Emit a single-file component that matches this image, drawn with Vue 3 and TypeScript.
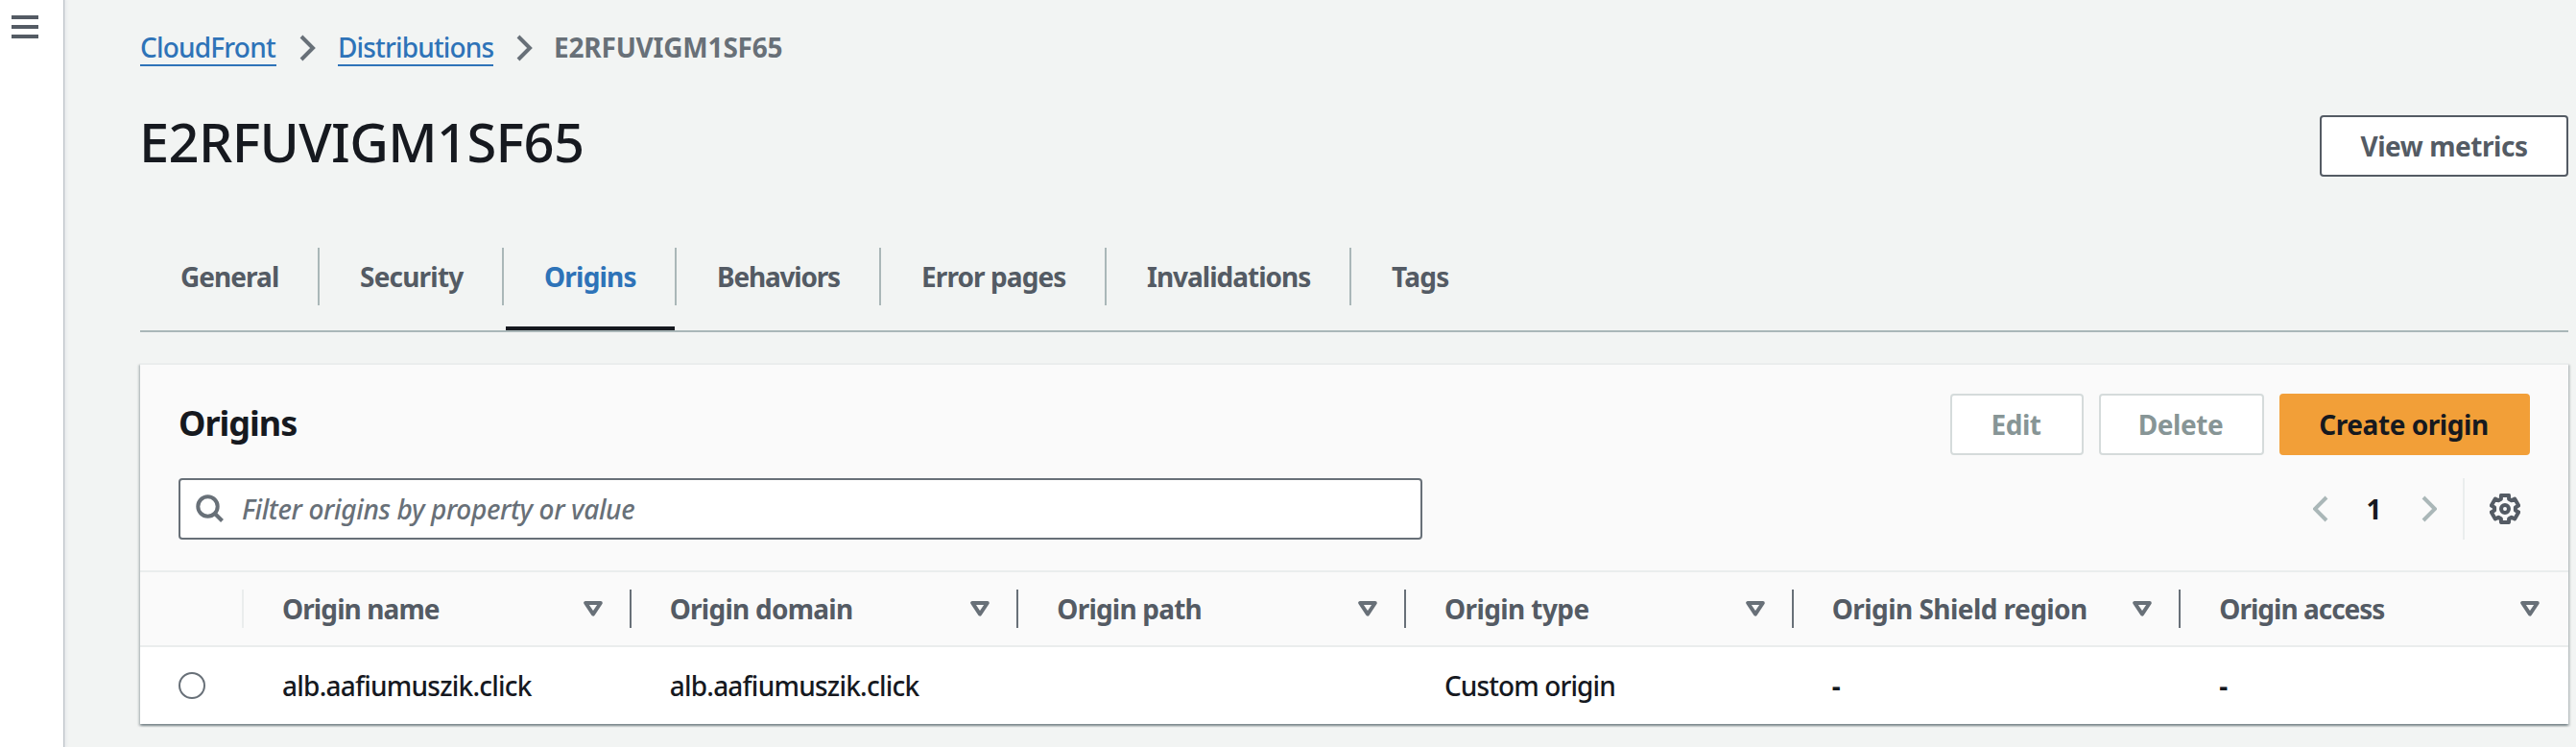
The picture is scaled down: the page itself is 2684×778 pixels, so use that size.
<script setup lang="ts">
interface Crumb { label: string; tracking: number; width: number }
interface Tab { label: string; tracking: number; active?: boolean }
interface Column { label: string; tracking: number; value: string; valueTracking: number }

const crumbs: Crumb[] = [
  { label: 'CloudFront', tracking: -0.8, width: 142 },
  { label: 'Distributions', tracking: -0.85, width: 162 },
]

const tabs: Tab[] = [
  { label: 'General', tracking: -0.95 },
  { label: 'Security', tracking: -0.8 },
  { label: 'Origins', tracking: -0.8, active: true },
  { label: 'Behaviors', tracking: -1.2 },
  { label: 'Error pages', tracking: -0.9 },
  { label: 'Invalidations', tracking: -1 },
  { label: 'Tags', tracking: -0.7 },
]

const columns: Column[] = [
  { label: 'Origin name', tracking: -0.9, value: 'alb.aafiumuszik.click', valueTracking: -0.77 },
  { label: 'Origin domain', tracking: -0.75, value: 'alb.aafiumuszik.click', valueTracking: -0.77 },
  { label: 'Origin path', tracking: -0.8, value: '', valueTracking: 0 },
  { label: 'Origin type', tracking: -0.6, value: 'Custom origin', valueTracking: -0.9 },
  { label: 'Origin Shield region', tracking: -0.55, value: '-', valueTracking: 0 },
  { label: 'Origin access', tracking: -1, value: '-', valueTracking: 0 },
]

const spacing = (px: number) => ({ letterSpacing: `${px}px` })

// Six-toothed gear outline centred in a 32x32 box.
const gearPoints = Array.from({ length: 6 }, (_, i) => i * 60 - 90)
  .flatMap((deg) => [
    [11, deg - 22],
    [14.6, deg - 16],
    [14.6, deg + 16],
    [11, deg + 22],
  ])
  .map(([r, deg]) => {
    const a = (deg * Math.PI) / 180
    return `${(16 + r * Math.cos(a)).toFixed(2)},${(16 + r * Math.sin(a)).toFixed(2)}`
  })
  .join(' ')
</script>

<template>
  <div class="page">
    <aside class="rail">
      <button class="burger" aria-label="Open navigation"><i></i><i></i><i></i></button>
    </aside>
    <main class="content">
      <nav class="crumbs">
        <template v-for="c in crumbs" :key="c.label">
          <a class="crumb" :style="{ letterSpacing: `${c.tracking}px`, width: `${c.width}px` }">{{ c.label }}</a>
          <svg class="sep" width="18" height="28" viewBox="0 0 18 28"><path d="M2 2 14 14 2 26" /></svg>
        </template>
        <span class="current">E2RFUVIGM1SF65</span>
      </nav>

      <header class="heading">
        <h1>E2RFUVIGM1SF65</h1>
        <button class="btn metrics">View metrics</button>
      </header>

      <div class="tabs">
        <div v-for="t in tabs" :key="t.label" class="tab" :class="{ active: t.active }">
          <span class="tab-label" :style="spacing(t.tracking)">{{ t.label }}</span>
        </div>
      </div>

      <section class="card">
        <div class="card-head">
          <div class="row">
            <h2>Origins</h2>
            <div class="actions">
              <button class="btn disabled edit">Edit</button>
              <button class="btn disabled delete">Delete</button>
              <button class="btn primary">Create origin</button>
            </div>
          </div>
          <div class="row tools">
            <div class="search">
              <svg width="30" height="30" viewBox="0 0 30 30"><circle cx="12.5" cy="12.5" r="10.2" /><path d="M19.5 19.5 27.5 27.5" /></svg>
              <span>Filter origins by property or value</span>
            </div>
            <div class="pager">
              <svg class="arrow" width="16" height="28" viewBox="0 0 16 28"><path d="M14 2 2 14 14 26" /></svg>
              <b>1</b>
              <svg class="arrow" width="16" height="28" viewBox="0 0 16 28"><path d="M2 2 14 14 2 26" /></svg>
              <span class="rule"></span>
              <svg class="gear" width="32" height="32" viewBox="0 0 32 32"><polygon :points="gearPoints" /><circle cx="16" cy="16" r="4" /></svg>
            </div>
          </div>
        </div>
        <div class="grid thead">
          <div class="th pick"></div>
          <div v-for="c in columns" :key="c.label" class="th">
            <span :style="spacing(c.tracking)">{{ c.label }}</span>
            <svg width="20" height="16" viewBox="0 0 20 16"><path d="M2.2 2H17.8L10 13.6Z" /></svg>
          </div>
        </div>
        <div class="grid tbody">
          <div class="td radio-cell"><span class="radio"></span></div>
          <div v-for="c in columns" :key="c.label" class="td" :class="{ empty: c.value === '-' }" :style="spacing(c.valueTracking)">{{ c.value }}</div>
        </div>
      </section>
    </main>
  </div>
</template>

<style>
body { margin: 0; background: #f2f3f3; }
</style>

<style scoped>
.page {
  display: flex;
  width: 2684px;
  height: 778px;
  overflow: hidden;
  background: #f2f4f3;
  color: #16191f;
  font: 500 28px/40px "Noto Sans", "Open Sans", sans-serif;
  white-space: nowrap;
}
.page * { box-sizing: border-box; }
h1, h2 { margin: 0; }
button { font: inherit; }
svg { display: block; flex: none; fill: none; }
.rail {
  flex: none;
  width: 66px;
  background: #fff;
  box-shadow: 1px 0 0 #bec3c9, 2px 0 0 #dcdfe2, 4px 0 2px #eaecee;
}
.burger {
  display: flex;
  flex-direction: column;
  gap: 6px;
  margin: 16px 0 0 12px;
  padding: 0;
  border: 0;
  background: none;
}
.burger i { width: 28px; height: 4px; background: #545b64; }
.content { flex: 1; padding: 28px 8px 0 80px; }

.crumbs { display: flex; height: 44px; align-items: flex-start; }
.crumb { height: 41px; border-bottom: 2px solid #2e73b8; color: #2e73b8; line-height: 43px; }
.sep { margin: 8px 22px 0 24px; stroke: #687078; stroke-width: 4; }
.current { line-height: 43px; margin-left: -1px; color: #687078; font-weight: 700; letter-spacing: -0.2px; }

.heading { display: flex; justify-content: space-between; height: 186px; padding-top: 38px; }
h1 { font-size: 56px; font-weight: 500; line-height: 74px; letter-spacing: -0.65px; margin-left: -1px; }
.btn {
  height: 64px;
  padding: 0 0 1px;
  border: 2px solid #545b64;
  border-radius: 4px;
  background: #fff;
  color: #545b64;
  font-weight: 700;
  line-height: 58px;
  letter-spacing: -0.45px;
}
.metrics { width: 259px; margin-top: 10px; }
.disabled { padding-right: 2px; border-color: #d5dbdb; color: #879596; }
.edit { width: 139px; }
.delete { width: 172px; }
.primary { width: 261px; padding-right: 2px; border-color: #f29f38; background: #f29f38; color: #16191f; }

.tabs {
  display: grid;
  grid-template-columns: 187px 192px 180px 213px 235px 255px 1fr;
  height: 88px;
  border-bottom: 2px solid #aab7b8;
}
.tab { padding: 0 2px; }
.tab-label {
  display: block;
  height: 60px;
  margin: 0 -2px;
  padding-left: 42px;
  border-right: 2px solid #aab7b8;
  color: #545b64;
  font-weight: 700;
  line-height: 60px;
}
.tab:last-child .tab-label { border-right: 0; }
.active .tab-label { color: #2e73b8; }
.active::after { content: ""; display: block; height: 4px; margin-top: 22px; background: #16191f; }

.card {
  margin-top: 32px;
  border-top: 2px solid #eaeded;
  background: #fff;
  box-shadow: 0 2px 2px rgba(0, 28, 36, 0.3), 2px 2px 2px rgba(0, 28, 36, 0.15), -2px 2px 2px rgba(0, 28, 36, 0.15);
}
.card-head { height: 216px; padding: 30px 40px 0; border-bottom: 2px solid #eaeded; background: #fafafa; }
.row { display: flex; align-items: center; justify-content: space-between; height: 64px; }
h2 { font-size: 36px; line-height: 44px; letter-spacing: -1px; padding-bottom: 2px; }
.actions { display: flex; gap: 16px; }
.tools { margin-top: 24px; }
.search {
  display: flex;
  align-items: center;
  width: 1296px;
  height: 64px;
  padding-left: 16px;
  border: 2px solid #687078;
  border-radius: 4px;
  background: #fff;
  color: #687078;
}
.search svg { stroke: #687078; stroke-width: 4; }
.search span { margin-left: 18px; font-style: italic; letter-spacing: -0.36px; }
.pager { display: flex; align-items: center; height: 64px; padding-right: 10px; }
.arrow { stroke: #aab7b8; stroke-width: 4; }
.pager b { width: 97px; text-align: center; padding: 0 2px 1px 0; }
.rule { width: 2px; height: 64px; margin: 0 26px 0 27px; background: #eaeded; }
.gear { stroke: #545b64; stroke-width: 4; stroke-linejoin: round; }

.grid { display: grid; grid-template-columns: 108px repeat(6, 1fr); }
.thead { height: 78px; align-items: center; border-bottom: 2px solid #eaeded; background: #fafafa; }
.th {
  display: flex;
  align-items: center;
  justify-content: space-between;
  height: 40px;
  padding: 0 28px 0 40px;
  border-right: 2px solid #687078;
  color: #545b64;
  font-weight: 700;
  line-height: 38px;
}
.th span { padding-bottom: 1px; }
.th:last-child { border-right-color: transparent; }
.pick { padding: 0; border-right-color: #eaeded; }
.th svg { stroke: #687078; stroke-width: 4; stroke-linejoin: round; }
.tbody { height: 80px; align-items: center; }
.td { height: 41px; padding-left: 40px; }
.empty { font-weight: 700; }
.radio-cell { display: flex; align-items: center; height: 80px; }
.radio { width: 28px; height: 28px; border: 2px solid #687078; border-radius: 50%; background: #fff; }
</style>
